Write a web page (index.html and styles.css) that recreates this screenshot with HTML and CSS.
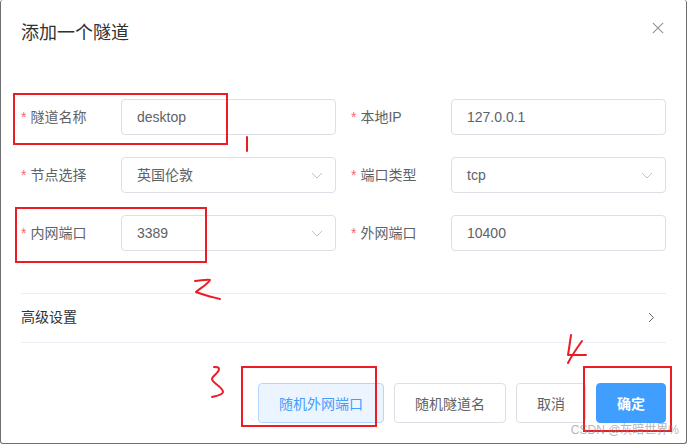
FILE: index.html
```html
<!DOCTYPE html>
<html lang="zh-CN">
<head>
  <meta charset="UTF-8" />
  <title>添加一个隧道</title>
  <link rel="stylesheet" href="styles.css">
</head>
<body>
  <div class="dialog">
    <div class="dialog-header">
      <span class="dialog-title">添加一个隧道</span>
      <svg class="close-icon" width="12" height="12" viewBox="0 0 12 12"><path d="M.8.8l10.4 10.4M11.2.8L.8 11.2" /></svg>
    </div>

    <div class="form-grid">
      <div class="form-item">
        <label class="form-label"><i class="required">*</i>隧道名称</label>
        <div class="field">desktop</div>
      </div>
      <div class="form-item">
        <label class="form-label"><i class="required">*</i>本地IP</label>
        <div class="field">127.0.0.1</div>
      </div>
      <div class="form-item">
        <label class="form-label"><i class="required">*</i>节点选择</label>
        <div class="field">英国伦敦
          <svg class="arrow-down" width="12" height="7" viewBox="0 0 12 7"><path d="M1 1l5 5 5-5" /></svg>
        </div>
      </div>
      <div class="form-item">
        <label class="form-label"><i class="required">*</i>端口类型</label>
        <div class="field">tcp
          <svg class="arrow-down" width="12" height="7" viewBox="0 0 12 7"><path d="M1 1l5 5 5-5" /></svg>
        </div>
      </div>
      <div class="form-item">
        <label class="form-label"><i class="required">*</i>内网端口</label>
        <div class="field">3389
          <svg class="arrow-down" width="12" height="7" viewBox="0 0 12 7"><path d="M1 1l5 5 5-5" /></svg>
        </div>
      </div>
      <div class="form-item">
        <label class="form-label"><i class="required">*</i>外网端口</label>
        <div class="field">10400</div>
      </div>
    </div>

    <div class="collapse-row">
      <span class="collapse-title">高级设置</span>
      <svg class="arrow-right" width="7" height="11" viewBox="0 0 7 11"><path d="M1 1l4.5 4.5L1 10" /></svg>
    </div>

    <div class="dialog-footer">
      <button class="btn btn-light">随机外网端口</button>
      <button class="btn">随机隧道名</button>
      <button class="btn btn-cancel">取消</button>
      <button class="btn btn-primary">确定</button>
    </div>
  </div>

  <!-- red pen marks drawn on top of the screenshot -->
  <svg class="marks" width="687" height="444" viewBox="0 0 687 444">
    <rect x="14" y="94" width="213" height="50" />
    <rect x="16" y="208" width="190" height="54" />
    <rect x="242" y="367" width="134" height="59" />
    <rect x="584" y="367" width="87" height="64" />
    <path d="M247 137v14" />
    <path d="M195 281c5 0 11-2 15-1-3 5-10 8-14 12 7 3 16 5 24 7" />
    <path d="M214 367c3 0 5 0 5 2 0 4-7 7-7 10 0 4 11 8 11 13 0 3-7 4-11 5" />
    <path d="M571 335c-1 7-2 14-3 20h18M582 341c-5 7-10 14-14 22" />
  </svg>
  <span class="watermark">CSDN @灰暗世界%</span>
</body>
</html>
```

FILE: styles.css
```css
* { box-sizing: border-box; }
html, body { margin: 0; padding: 0; }
body {
  width: 687px;
  height: 444px;
  position: relative;
  overflow: hidden;
  background: #fff;
  font-family: "Liberation Sans", "Noto Sans CJK SC", sans-serif;
  font-size: 14px;
  color: #606266;
}

.dialog {
  width: 687px;
  height: 444px;
  padding: 21px 20px 0;
  border: 1px solid #6e6e6e;
  border-top: 0;
  border-radius: 3px;
  background: #fff;
}
.dialog-header { display: flex; justify-content: space-between; height: 24px; }
.dialog-title { font-size: 18px; line-height: 24px; color: #303133; }
.close-icon { margin: 1px 2px 0 0; }
.close-icon path { fill: none; stroke: #909399; stroke-width: 1.1; }

.form-grid {
  display: grid;
  grid-template-columns: 315px 315px;
  column-gap: 15px;
  row-gap: 22px;
  margin-top: 54px;
}
.form-item { display: flex; align-items: center; }
.form-label { width: 100px; line-height: 36px; }
.required { font-style: normal; color: #f56c6c; margin-right: 4px; }
.field {
  flex: 1;
  height: 36px;
  line-height: 34px;
  padding: 0 12px 0 15px;
  border: 1px solid #dcdfe6;
  border-radius: 4px;
  display: flex;
  justify-content: space-between;
  align-items: center;
}
.arrow-down path, .arrow-right path { fill: none; stroke-width: 1; }
.arrow-down path { stroke: #c0c4cc; }
.arrow-right path { stroke: #606266; }

.collapse-row {
  display: flex;
  justify-content: space-between;
  align-items: center;
  height: 50px;
  margin-top: 42px;
  padding: 0 11px 2px 0;
  border-top: 1px solid #ebeef5;
  border-bottom: 1px solid #ebeef5;
  color: #303133;
}
.collapse-title { margin-bottom: 2px; }

.dialog-footer { display: flex; justify-content: flex-end; gap: 10px; margin-top: 40px; }
.btn {
  height: 40px;
  padding: 0 20px;
  border: 1px solid #dcdfe6;
  border-radius: 4px;
  background: #fff;
  color: #606266;
  font: inherit;
}
.btn-cancel { width: 70px; }
.btn-light { background: #ecf5ff; border-color: #b3d8ff; color: #409eff; }
.btn-primary { width: 70px; background: #409eff; border-color: #409eff; color: #fff; font-weight: 700; }

.marks { position: absolute; left: 0; top: 0; pointer-events: none; }
.marks rect, .marks path { fill: none; stroke: #ed1c24; stroke-width: 2; }
.marks path { stroke-linecap: round; stroke-linejoin: round; }

.watermark {
  position: absolute;
  right: 8px;
  top: 421px;
  font-size: 12px;
  line-height: 18px;
  color: rgba(130, 130, 130, 0.6);
}
```
